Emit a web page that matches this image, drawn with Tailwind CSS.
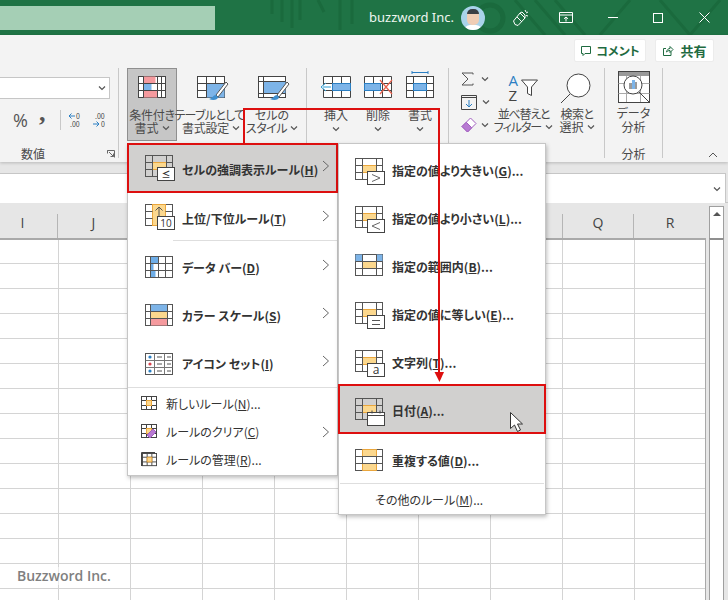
<!DOCTYPE html>
<html lang="ja">
<head>
    <meta charset="UTF-8" />
    <title>Excel 条件付き書式</title>
    <script src="https://cdn.jsdelivr.net/npm/@tailwindcss/browser@4"></script>
</head>
<body class="w-[728px] h-[600px] overflow-hidden relative bg-white text-[12px] text-[#444] [font-feature-settings:'palt'] font-['Noto_Sans_CJK_JP','Noto_Sans',sans-serif]">

    <!-- shared icon parts -->
    <svg class="hidden">
        <symbol id="chev" viewBox="0 0 8 6"><path d="M1 1.500 4 4.500 7 1.500" fill="none" stroke="#555" stroke-width="1.200"/></symbol>
        <symbol id="arrow" viewBox="0 0 8 12"><path d="M1 1 6.500 6 1 11" fill="none" stroke="#666" stroke-width="1"/></symbol>
        <symbol id="cellgrid" viewBox="0 0 30 28">
            <rect x="7.500" y="7.500" width="14" height="7" fill="#fcd88e"/>
            <path d="M7.500 14.500h14M7.500 7.500h14" stroke="#eaa63c" fill="none"/>
            <rect x=".5" y=".5" width="27" height="21" fill="none" stroke="#555"/>
            <path d="M.5 7.500h7M21.500 7.500h6M.5 14.500h7M21.500 14.500h6M7.500 .5v21M21.500 .5v21" stroke="#555" fill="none"/>
        </symbol>
        <symbol id="small" viewBox="0 0 16 16">
            <rect x=".5" y=".5" width="15" height="13" fill="#fff" stroke="#444"/>
            <path d="M.5 4.500h15M.5 9.500h15M5.500 .5v13M10.500 .5v13" stroke="#444" fill="none"/>
            <rect x="5.500" y="4.500" width="5" height="5" fill="#fcd88e" stroke="#eaa63c"/>
        </symbol>
    </svg>

    <!-- Title bar -->
    <div class="relative h-[35px] bg-[#1f7345] flex items-center text-white overflow-hidden">
        <svg class="absolute inset-0" width="728" height="35" fill="none" stroke="#1a6a3d" stroke-width="3">
            <path d="M272 0v14M282 0v22M292 0v28M300 0v20M318 0l6 12M340 0v30M352 0v24"/>
            <circle cx="490" cy="18" r="13" stroke-width="5"/>
            <path d="M515 0l30 35M535 0l30 35M555 0l30 35M600 35l30-35M660 0l30 35M690 35l30-35"/>
        </svg>
        <div class="relative w-[215px] h-[24px] bg-[#a5cfb5] shrink-0"></div>
        <div class="relative ml-[154px] w-[92px] text-[13px] leading-[35px] font-['Noto_Sans',sans-serif] text-[#eef6f0] whitespace-nowrap">buzzword Inc.</div>
        <div class="relative w-[24px] h-[24px] rounded-full bg-[#a9d3ea] overflow-hidden shrink-0">
            <div class="absolute left-[6px] top-[4px] w-[12px] h-[15px] rounded-[5px] bg-[#f0cdb5]"></div>
            <div class="absolute left-[6px] top-[3px] w-[12px] h-[5px] rounded-t-[5px] bg-[#3a3f45]"></div>
            <div class="absolute left-[3px] top-[19px] w-[18px] h-[8px] bg-white rounded-t-[6px]"></div>
        </div>
        <svg class="relative ml-[27px] shrink-0" width="18" height="18" viewBox="0 0 18 18" fill="none" stroke="#fff" stroke-width="1"><path d="M1.500 12 8 4l5 5-7 7.500-3-1zM8 4l2-1 3 3v3M5 8l5 5M13 1l1 2M16 3l-2 1M16 7l-2-.5"/></svg>
        <svg class="relative ml-[29px] shrink-0" width="14" height="12" viewBox="0 0 14 12" fill="none" stroke="#fff"><path d="M.5 .5h13v10H.5zM.5 3h13M7 9.500V5M5 6.800 7 5l2 1.800"/></svg>
        <div class="relative ml-[35px] w-[10px] h-px bg-white shrink-0"></div>
        <div class="relative ml-[35px] w-[10px] h-[10px] border border-white shrink-0"></div>
        <svg class="relative ml-[36px] shrink-0" width="11" height="11" viewBox="0 0 11 11" stroke="#fff" fill="none"><path d="M.5 .5l10 10M10.500 .5l-10 10"/></svg>
    </div>

    <!-- Ribbon -->
    <div class="h-[127px] bg-[#f3f3f3] shadow-[0_1px_3px_rgba(0,0,0,0.2)] relative">
        <div class="h-[33px] flex justify-end items-start pt-[4px] pr-[14px] gap-[9px]">
            <div class="w-[72px] h-[23px] bg-white rounded-[2px] border border-[#ececec] flex items-center justify-center gap-[4px] font-bold text-[#1f6b41] text-[12px]">
                <svg width="12" height="12" viewBox="0 0 12 12" fill="none" stroke="#1f6b41"><path d="M1.500 1.500h9v7H5l-2 2v-2H1.500z"/></svg>コメント
            </div>
            <div class="w-[59px] h-[23px] bg-white rounded-[2px] border border-[#ececec] flex items-center justify-center gap-[6px] font-bold text-[#1f6b41] text-[13px]">
                <svg width="12" height="12" viewBox="0 0 12 12" fill="none" stroke="#1f6b41"><path d="M9 6.500v4H1.500v-7H4M4.500 7C5 4.500 6.500 3.500 8 3.500V1.500l3 3-3 3V5.500c-1.500 0-2.500.5-3.500 1.500z"/></svg>共有
            </div>
        </div>
        <div class="h-[94px] flex items-stretch text-center leading-[13px] text-[#4a4a4a]">

            <!-- 数値 -->
            <div class="w-[119px] shrink-0 relative pt-[9px] border-r border-[#c8c8c8] mb-[4px]">
                <div class="w-[110px] h-[22px] bg-white border border-[#c6c6c6] border-l-0 flex items-center justify-end pr-[3px]">
                    <svg width="8" height="6"><use href="#chev"/></svg>
                </div>
                <div class="flex items-center h-[20px] mt-[11px] text-[#555]">
                    <svg width="4" height="6" class="shrink-0"><use href="#chev" x="-4"/></svg>
                    <span class="ml-[9px] w-[26px] text-[18px] leading-[20px] text-left font-['Open_Sans',sans-serif] shrink-0">%</span>
                    <span class="w-[20px] h-[20px] text-[26px] leading-[16px] font-bold text-left font-['Liberation_Serif',serif] shrink-0 relative -top-[5px]">,</span>
                    <div class="ml-px w-px h-[20px] bg-[#c8c8c8] shrink-0"></div>
                    <svg class="ml-[7px] shrink-0" width="16" height="16" viewBox="0 0 16 16"><path d="M7 4H1M3.500 1.500 1 4l2.500 2.500" stroke="#2b7fc3" fill="none"/><text x="8" y="7" font-size="7" fill="#444">0</text><text x="2" y="15" font-size="7" fill="#444">.00</text></svg>
                    <svg class="ml-[8px] shrink-0" width="16" height="16" viewBox="0 0 16 16"><text x="3" y="7" font-size="7" fill="#444">.00</text><path d="M1 12h6M4.500 9.500 7 12l-2.500 2.500" stroke="#2b7fc3" fill="none"/><text x="9" y="15" font-size="7" fill="#444">0</text></svg>
                </div>
                <div class="absolute left-[21px] top-[78px] text-[12px] leading-[16px]">数値</div>
                <svg class="absolute left-[107px] top-[82px]" width="8" height="8" viewBox="0 0 8 8" fill="none" stroke="#666"><path d="M.5 .5h7v7M.5 .5v3M3.500 .5H.5M2 2l4.500 4.500M3.500 6.500h3v-3"/></svg>
            </div>

            <!-- 条件付き書式 -->
            <div class="ml-[8px] w-[50px] h-[73px] shrink-0 bg-[#c6c6c6] border border-[#8f8f8f] flex flex-col items-center">
                <svg class="mt-[7px] -mb-px shrink-0" width="28" height="33" viewBox="0 0 28 33">
                    <rect x=".5" y=".5" width="27" height="21" fill="#fff" stroke="#444"/>
                    <path d="M5.500 .5h12v7h-12z" fill="#f59a9e"/>
                    <path d="M5.500 7.500h8v7h-8z" fill="#7db4e8"/>
                    <path d="M5.500 14.500h14v7h-14z" fill="#f59a9e"/>
                    <path d="M.5 7.500h27M.5 14.500h27M5.500 .5v21M19.500 .5v21M23.500 .5v21" stroke="#444" fill="none"/>
                </svg>
                <div class="whitespace-nowrap tracking-[-0.2px]">条件付き</div>
                <div class="whitespace-nowrap flex items-center justify-center gap-[3px]">書式<svg width="8" height="6"><use href="#chev"/></svg></div>
            </div>

            <!-- テーブルとして書式設定 -->
            <div class="ml-px w-[66px] shrink-0 flex flex-col items-center">
                <svg class="mt-[8px] -mb-px ml-[4px] shrink-0" width="32" height="33" viewBox="0 0 32 33">
                    <rect x=".5" y=".5" width="27" height="21" fill="#fff" stroke="#444"/>
                    <rect x="9.500" y="7.500" width="18" height="14" fill="#7db4e8"/>
                    <path d="M.5 7.500h27M.5 14.500h9M9.500 .5v21M18.500 .5v7" stroke="#444" fill="none"/>
                    <path d="M29 6 19 19l2 2L31 8z" fill="#fff" stroke="#555"/>
                    <path d="M19 19c-3 0-3 3-7 4 4 2 9 1 9-2z" fill="#3f8fcf"/>
                </svg>
                <div class="whitespace-nowrap tracking-[-0.7px] -ml-[3px]">テーブルとして</div>
                <div class="whitespace-nowrap flex items-center justify-center gap-[3px] tracking-[-0.2px]">書式設定<svg width="8" height="6"><use href="#chev"/></svg></div>
            </div>

            <!-- セルのスタイル -->
            <div class="w-[56px] shrink-0 flex flex-col items-center">
                <svg class="mt-[8px] -mb-px ml-[4px] shrink-0" width="32" height="33" viewBox="0 0 32 33">
                    <rect x=".5" y=".5" width="27" height="21" fill="#fff" stroke="#444"/>
                    <rect x="5.500" y="5.500" width="22" height="12" fill="#7db4e8"/>
                    <path d="M.5 5.500h27M5.500 .5v21M.5 17.500h27" stroke="#444" fill="none"/>
                    <path d="M29 6 19 19l2 2L31 8z" fill="#fff" stroke="#555"/>
                    <path d="M19 19c-3 0-3 3-7 4 4 2 9 1 9-2z" fill="#3f8fcf"/>
                </svg>
                <div class="whitespace-nowrap">セルの</div>
                <div class="whitespace-nowrap flex items-center justify-center gap-[3px] tracking-[-0.5px]">スタイル<svg width="8" height="6"><use href="#chev"/></svg></div>
            </div>

            <!-- セル -->
            <div class="ml-[6px] w-[143px] shrink-0 pl-[8px] pr-[7px] flex border-x border-[#c8c8c8] mb-[4px]">
                <div class="w-[42px] flex flex-col items-center">
                    <svg class="mt-[8px] -mb-px shrink-0" width="32" height="33" viewBox="0 0 32 33">
                        <path d="M3.500 .5h27v21h-27z" fill="#fff" stroke="#444"/>
                        <path d="M3.500 7.500h27M3.500 14.500h27M12.500 .5v21M21.500 .5v21" stroke="#444" fill="none"/>
                        <rect x="12.500" y="7.500" width="18" height="7" fill="#7db4e8" stroke="#2b7fc3"/>
                        <path d="M11 11H3M6 7 1 11l5 4" fill="#fff" stroke="#2b9bd3"/>
                    </svg>
                    <div class="whitespace-nowrap">挿入</div>
                    <svg class="mt-[5px]" width="8" height="6"><use href="#chev"/></svg>
                </div>
                <div class="w-[42px] flex flex-col items-center">
                    <svg class="mt-[8px] -mb-px shrink-0" width="32" height="33" viewBox="0 0 32 33">
                        <path d="M2.500 .5h27v21h-27z" fill="#fff" stroke="#444"/>
                        <path d="M2.500 7.500h27M2.500 14.500h27M11.500 .5v21M20.500 .5v21" stroke="#444" fill="none"/>
                        <rect x="2.500" y="7.500" width="16" height="7" fill="#7db4e8" stroke="#2b7fc3"/>
                        <path d="M18 4 30 18M30 4 18 18" stroke="#e8604c" stroke-width="1.200" fill="none"/>
                    </svg>
                    <div class="whitespace-nowrap">削除</div>
                    <svg class="mt-[5px]" width="8" height="6"><use href="#chev"/></svg>
                </div>
                <div class="w-[42px] flex flex-col items-center">
                    <svg class="mt-[3px] -mb-px shrink-0" width="28" height="38" viewBox="0 0 28 38">
                        <path d="M6 1.500h16M6 0v3M22 0v3" stroke="#2b7fc3" fill="none"/>
                        <rect x=".5" y="5.500" width="27" height="21" fill="#fff" stroke="#444"/>
                        <path d="M.5 12.500h27M.5 19.500h27M7.500 5.500v21M20.500 5.500v21" stroke="#444" fill="none"/>
                        <rect x="7.500" y="12.500" width="13" height="7" fill="#7db4e8" stroke="#2b7fc3"/>
                    </svg>
                    <div class="whitespace-nowrap">書式</div>
                    <svg class="mt-[5px]" width="8" height="6"><use href="#chev"/></svg>
                </div>
            </div>

            <!-- 編集 -->
            <div class="w-[156px] shrink-0 flex border-r border-[#c8c8c8] mb-[4px] relative">
                <div class="w-[44px] pl-[12px] pt-[1px] flex flex-col gap-[3px] shrink-0">
                    <div class="h-[20px] flex items-center gap-[7px]">
                        <svg width="13" height="14" viewBox="0 0 13 14" fill="none" stroke="#555"><path d="M12 2.500V1H1l6 6-6 6h11v-1.500"/></svg>
                        <svg width="8" height="6"><use href="#chev"/></svg>
                    </div>
                    <div class="h-[20px] flex items-center gap-[5px]">
                        <svg width="16" height="15" viewBox="0 0 16 15" fill="none"><path d="M.5 .5h15v14H.5zM.5 2.500h15" stroke="#444"/><path d="M8 5v7M5 9l3 3 3-3" stroke="#2b7fc3"/></svg>
                        <svg width="8" height="6"><use href="#chev"/></svg>
                    </div>
                    <div class="h-[20px] flex items-center gap-[4px]">
                        <svg width="16" height="16" viewBox="0 0 16 16"><path d="M9.500 1 15 6.500 6.500 15 1 9.500z" fill="#fff" stroke="#a25fc0"/><path d="M5.250 5.250 1 9.500 6.500 15l4.250-4.250z" fill="#b77ad2" stroke="#a25fc0"/></svg>
                        <svg width="8" height="6"><use href="#chev"/></svg>
                    </div>
                </div>
                <div class="w-[61px] flex flex-col items-center shrink-0">
                    <div class="h-[39px] w-[30px] shrink-0 relative">
                        <span class="absolute left-0 top-[3px] text-[15px] leading-[18px] text-[#2b7fc3] font-['Open_Sans',sans-serif]">A</span>
                        <span class="absolute left-0 top-[18px] text-[15px] leading-[18px] text-[#444] font-['Open_Sans',sans-serif]">Z</span>
                        <svg class="absolute left-[12px] top-[11px]" width="17" height="18" viewBox="0 0 17 18" fill="#fff" stroke="#444"><path d="M.5 1h16l-6 7v8.500l-4-2V8z"/></svg>
                    </div>
                    <div class="whitespace-nowrap tracking-[-1.200px]">並べ替えと</div>
                    <div class="whitespace-nowrap flex items-center justify-center gap-[4px] tracking-[-1px]">フィルター<svg width="8" height="6"><use href="#chev"/></svg></div>
                </div>
                <div class="w-[46px] flex flex-col items-center shrink-0">
                    <svg class="mt-[5px] mb-[1px] mr-[4px] shrink-0" width="32" height="33" viewBox="0 0 32 33" fill="none" stroke="#444"><circle cx="19.500" cy="12.500" r="11.500" fill="#fff"/><path d="M11 21 2 30"/></svg>
                    <div class="whitespace-nowrap tracking-[-0.5px]">検索と</div>
                    <div class="whitespace-nowrap flex items-center justify-center gap-[3px]">選択<svg width="8" height="6"><use href="#chev"/></svg></div>
                </div>
            </div>

            <!-- 分析 -->
            <div class="w-[58px] shrink-0 flex flex-col items-center border-r border-[#c8c8c8] mb-[4px] relative">
                <svg class="mt-[3px] shrink-0" width="32" height="33" viewBox="0 0 32 33">
                    <rect x=".5" y=".5" width="31" height="31" fill="#fff" stroke="#444"/>
                    <rect x="1" y="1" width="30" height="4" fill="#999"/>
                    <path d="M.5 12.500h31M.5 22.500h31M8.500 5v26M22.500 5v26" stroke="#aaa" fill="none"/>
                    <circle cx="15" cy="14" r="9" fill="#fff" stroke="#444"/>
                    <path d="M11 12h3v6h-3z" fill="#9b9b9b"/><path d="M14 9h3v9h-3z" fill="#7db4e8"/><path d="M17 11h2v7h-2z" fill="#9b9b9b"/>
                    <path d="M21 21 31 31" stroke="#444"/>
                </svg>
                <div class="mt-[2px]">データ</div>
                <div class="mt-px">分析</div>
                <div class="absolute left-0 right-0 top-[78px] text-[12px] leading-[16px]">分析</div>
            </div>
            <svg class="ml-[45px] mt-[84px] shrink-0" width="10" height="6" viewBox="0 0 10 6" fill="none" stroke="#555"><path d="M1 5 5 1l4 4"/></svg>
        </div>
    </div>

    <!-- Formula bar -->
    <div class="h-[41px] bg-[#e6e6e6] pt-[11px] pr-[2px] border-b border-[#c6c6c6]">
        <div class="h-[30px] bg-white border border-[#c6c6c6] border-l-0 border-b-0 flex items-center justify-end pr-[4px]">
            <svg width="8" height="6"><use href="#chev"/></svg>
        </div>
    </div>

    <!-- Column headers -->
    <div class="h-[35px] bg-[#e6e6e6] flex text-[14px] text-[#444] font-['Open_Sans',sans-serif] relative">
        <div class="w-[58px] flex items-end justify-center pr-[12px] pb-[5px] shrink-0 border-r border-[#b5b5b5] mt-[11px]">I</div>
        <div class="w-[72px] flex items-end justify-center pb-[5px] shrink-0 border-r border-[#b5b5b5] mt-[11px]">J</div>
        <div class="w-[432px] shrink-0"></div>
        <div class="w-[72px] flex items-end justify-center pb-[5px] shrink-0 border-x border-[#b5b5b5] mt-[11px]">Q</div>
        <div class="w-[72px] flex items-end justify-center pb-[5px] shrink-0 mt-[11px]">R</div>
        <div class="ml-[3px] mt-[3px] w-[15px] h-[32px] bg-white border border-[#9f9f9f] border-b-0 flex items-start justify-center pt-[5px]">
            <div class="w-0 h-0 border-x-[4px] border-x-transparent border-b-[4px] border-b-[#555]"></div>
        </div>
    </div>

    <!-- Sheet -->
    <div class="h-[362px] flex bg-[#e6e6e6]">
        <div class="w-[706px] border-t-2 border-r border-t-[#a9a9a9] border-r-[#a9a9a9] bg-white bg-[linear-gradient(to_right,#d4d4d4_1px,transparent_1px),linear-gradient(to_bottom,#d4d4d4_1px,transparent_1px)] bg-[size:72px_25px] bg-[position:58px_23px] shrink-0"></div>
        <div class="ml-[3px] w-[15px] bg-white border-x border-[#9f9f9f] border-t-2 border-t-[#8f8f8f]"></div>
    </div>
    <div class="absolute left-[17px] top-[567px] text-[14px] leading-[18px] font-semibold text-[#808080] font-['Open_Sans',sans-serif] bg-white/50">Buzzword Inc.</div>

    <!-- Left flyout -->
    <div class="absolute left-[127px] top-[143px] w-[211px] h-[333px] bg-white border border-[#c6c6c6] shadow-[1px_2px_4px_rgba(0,0,0,0.25)] font-medium text-[#333]">
        <div class="h-[50px] -mt-px -mx-px flex items-center pt-[4px] bg-[#d1d0cf] border-2 border-[#dd0f0f] font-bold">
            <div class="ml-[16px] mt-[-2px] w-[37px] h-[28px] relative shrink-0">
                <svg width="30" height="28" class="absolute left-0 top-0"><use href="#cellgrid"/></svg>
                <div class="absolute left-[12px] top-[12px] w-[18px] h-[14px] bg-white border border-[#444] flex items-center justify-center text-[9px] leading-[9px]">≤</div>
            </div>
            <div class="whitespace-nowrap">セルの強調表示ルール(<u>H</u>)</div>
            <svg class="ml-auto mr-[6px] mt-[-8px] shrink-0" width="8" height="12"><use href="#arrow"/></svg>
        </div>
        <div class="h-[47px] flex items-center pt-[4px] font-bold">
            <div class="ml-[17px] mt-[-2px] w-[37px] h-[28px] relative shrink-0">
                <svg width="28" height="22" viewBox="0 0 28 22" class="absolute left-0 top-0"><rect x=".5" y=".5" width="27" height="21" fill="#fff" stroke="#555"/><rect x="7.500" y=".5" width="13" height="21" fill="#fcd88e" stroke="#eaa63c"/><path d="M.5 7.500h7M20.500 7.500h7M.5 14.500h7M14 13V3M10.500 6.500 14 3l3.500 3.500" stroke="#555" fill="none"/></svg>
                <div class="absolute left-[12px] top-[12px] w-[18px] h-[14px] bg-white border border-[#444] flex items-center justify-center text-[10px] leading-[10px] font-normal font-['Open_Sans',sans-serif]">10</div>
            </div>
            <div class="whitespace-nowrap">上位/下位ルール(<u>T</u>)</div>
            <svg class="ml-auto mr-[7px] mt-[-6px] shrink-0" width="8" height="12"><use href="#arrow"/></svg>
        </div>
        <div class="ml-[45px] h-px bg-[#dedede]"></div>
        <div class="h-[48px] flex items-center pt-[6px] font-bold">
            <svg class="ml-[17px] mb-[3px] shrink-0" width="37" height="22" viewBox="0 0 37 22"><rect x=".5" y=".5" width="27" height="21" fill="#fff" stroke="#555"/><path d="M5.500 .5h8v7h-5v7h2v7h-5z" fill="#6faee8"/><path d="M.5 .5h27v21H.5zM.5 7.500h27M.5 14.500h27M5.500 .5v21M13.500 .5v21M20.500 .5v21" stroke="#555" fill="none"/></svg>
            <div class="whitespace-nowrap">データ バー(<u>D</u>)</div>
            <svg class="ml-auto mr-[7px] mb-[6px] shrink-0" width="8" height="12"><use href="#arrow"/></svg>
        </div>
        <div class="h-[48px] flex items-center pt-[6px] font-bold">
            <svg class="ml-[17px] mb-[3px] shrink-0" width="37" height="22" viewBox="0 0 37 22"><rect x=".5" y=".5" width="27" height="21" fill="#fff" stroke="#555"/><rect x="5.500" y=".5" width="17" height="7" fill="#7db4e8"/><rect x="5.500" y="7.500" width="17" height="7" fill="#fcd88e"/><rect x="5.500" y="14.500" width="17" height="7" fill="#f59a9e"/><path d="M.5 7.500h27M.5 14.500h27M5.500 .5v21M22.500 .5v21" stroke="#555" fill="none"/></svg>
            <div class="whitespace-nowrap">カラー スケール(<u>S</u>)</div>
            <svg class="ml-auto mr-[7px] mb-[6px] shrink-0" width="8" height="12"><use href="#arrow"/></svg>
        </div>
        <div class="h-[50px] flex items-center pt-[4px] font-bold">
            <svg class="ml-[17px] shrink-0" width="37" height="22" viewBox="0 0 37 22"><rect x=".5" y=".5" width="27" height="21" fill="#fff" stroke="#555"/><path d="M.5 7.500h27M.5 14.500h27M9.500 .5v21M19.500 .5v21" stroke="#777" fill="none"/><circle cx="5" cy="4" r="1.600" fill="#2b7fc3"/><circle cx="5" cy="11" r="1.600" fill="#d9434e"/><circle cx="5" cy="18" r="1.600" fill="#2b7fc3"/><path d="M12 4h5M22 4h4M12 11h5M22 11h4M12 18h5M22 18h4" stroke="#555"/></svg>
            <div class="whitespace-nowrap">アイコン セット(<u>I</u>)</div>
            <svg class="ml-auto mr-[7px] mb-[6px] shrink-0" width="8" height="12"><use href="#arrow"/></svg>
        </div>
        <div class="h-px bg-[#dedede]"></div>
        <div class="pt-[2px] font-normal">
            <div class="h-[28px] flex items-center">
                <svg class="ml-[13px] mr-[9px] shrink-0" width="16" height="16"><use href="#small"/></svg>新しいルール(<u>N</u>)...
            </div>
            <div class="h-[28px] flex items-center">
                <svg class="ml-[13px] mr-[9px] shrink-0" width="16" height="16" viewBox="0 0 16 16"><use href="#small"/><path d="M12 5l3 3-6 6-3-3z" fill="#b77ad2" stroke="#a25fc0"/></svg>ルールのクリア(<u>C</u>)
                <svg class="ml-auto mr-[7px] shrink-0" width="8" height="12"><use href="#arrow"/></svg>
            </div>
            <div class="h-[28px] flex items-center">
                <svg class="ml-[13px] mr-[9px] shrink-0" width="16" height="16" viewBox="0 0 16 16"><path d="M.5 14V.5H14" stroke="#444" fill="none"/><svg x="1" y="1" width="15" height="15"><use href="#small"/></svg></svg>ルールの管理(<u>R</u>)...
            </div>
        </div>
    </div>

    <!-- Right flyout -->
    <div class="absolute left-[338px] top-[143px] w-[208px] h-[372px] bg-white border border-[#c6c6c6] shadow-[1px_2px_4px_rgba(0,0,0,0.25)] font-bold text-[#333]">
        <div class="h-[48px] flex items-center pt-[6px]">
            <div class="ml-[16px] mt-[2px] w-[37px] h-[28px] relative shrink-0">
                <svg width="30" height="28" class="absolute left-0 top-0"><use href="#cellgrid"/></svg>
                <svg class="absolute left-[12px] top-[13px]" width="18" height="14" viewBox="0 0 18 14"><rect x=".5" y=".5" width="17" height="13" fill="#fff" stroke="#444"/><path d="M5 3.500 13 7 5 10.500" fill="none" stroke="#666"/></svg>
            </div>
            指定の値より大きい(<u>G</u>)...
        </div>
        <div class="h-[48px] flex items-center pt-[6px]">
            <div class="ml-[16px] mt-[2px] w-[37px] h-[28px] relative shrink-0">
                <svg width="30" height="28" class="absolute left-0 top-0"><use href="#cellgrid"/></svg>
                <svg class="absolute left-[12px] top-[13px]" width="18" height="14" viewBox="0 0 18 14"><rect x=".5" y=".5" width="17" height="13" fill="#fff" stroke="#444"/><path d="M13 3.500 5 7l8 3.500" fill="none" stroke="#666"/></svg>
            </div>
            指定の値より小さい(<u>L</u>)...
        </div>
        <div class="h-[48px] flex items-center pt-[6px]">
            <svg class="ml-[16px] mb-[4px] shrink-0" width="37" height="22" viewBox="0 0 37 22"><rect x=".5" y=".5" width="27" height="21" fill="#fff" stroke="#555"/><path d="M.5 .5h7v7h-7zM21.500 .5h6v7h-6z" fill="#7db4e8"/><rect x="7.500" y="7.500" width="14" height="7" fill="#fcd88e"/><path d="M.5 7.500h27M.5 14.500h27M7.500 .5v21M21.500 .5v21" stroke="#555" fill="none"/></svg>
            指定の範囲内(<u>B</u>)...
        </div>
        <div class="h-[48px] flex items-center pt-[6px]">
            <div class="ml-[16px] mt-[2px] w-[37px] h-[28px] relative shrink-0">
                <svg width="30" height="28" class="absolute left-0 top-0"><use href="#cellgrid"/></svg>
                <svg class="absolute left-[12px] top-[13px]" width="18" height="14" viewBox="0 0 18 14"><rect x=".5" y=".5" width="17" height="13" fill="#fff" stroke="#444"/><path d="M5 5.500h8M5 9.500h8" fill="none" stroke="#555"/></svg>
            </div>
            指定の値に等しい(<u>E</u>)...
        </div>
        <div class="h-[48px] flex items-center pt-[6px]">
            <div class="ml-[16px] mt-[2px] w-[37px] h-[28px] relative shrink-0">
                <svg width="30" height="28" class="absolute left-0 top-0"><use href="#cellgrid"/></svg>
                <div class="absolute left-[12px] top-[13px] w-[18px] h-[14px] bg-white border border-[#444] flex items-center justify-center text-[12px] leading-[12px] font-normal font-['Open_Sans',sans-serif]">a</div>
            </div>
            文字列(<u>T</u>)...
        </div>
        <div class="h-[50px] -mx-px flex items-center pt-[4px] bg-[#d1d0cf] border-2 border-[#dd0f0f]">
            <div class="ml-[15px] mt-px w-[37px] h-[28px] relative shrink-0">
                <svg width="30" height="28" class="absolute left-0 top-0"><use href="#cellgrid"/></svg>
                <svg class="absolute left-[12px] top-[12px]" width="18" height="16" viewBox="0 0 18 16"><rect x=".5" y="2.500" width="17" height="13" fill="#fff" stroke="#444"/><path d="M.5 5.500h17M5 .5v3M13 .5v3" stroke="#444" fill="none"/></svg>
            </div>
            日付(<u>A</u>)...
        </div>
        <div class="h-[49px] flex items-center pt-[4px]">
            <svg class="ml-[16px] mb-[2px] shrink-0" width="37" height="22" viewBox="0 0 37 22"><rect x=".5" y=".5" width="27" height="21" fill="#fff" stroke="#555"/><path d="M7.500 .5h14v7h-14zM7.500 14.500h14v7h-14z" fill="#fcd88e" stroke="#eaa63c"/><path d="M.5 7.500h7M21.500 7.500h6M.5 14.500h7M21.500 14.500h6M7.500 7.500v7M21.500 7.500v7M.5 7.500h27M.5 14.500h27" stroke="#555" fill="none"/></svg>
            重複する値(<u>D</u>)...
        </div>
        <div class="mx-px h-px bg-[#dedede]"></div>
        <div class="h-[31px] pl-[36px] flex items-center font-normal">その他のルール(<u>M</u>)...</div>
    </div>

    <!-- Annotation line and mouse pointer -->
    <svg class="absolute left-0 top-0 pointer-events-none" width="728" height="600" fill="none">
        <path d="M244 143V109H439V374" stroke="#dd0f0f" stroke-width="2"/>
        <path d="M434.500 372h9.500L439.500 382z" fill="#dd0f0f"/>
        <path d="M510.500 412.500v16l4-3.500 3 6.500 3-1.500-3-6h5z" fill="#fff" stroke="#333"/>
    </svg>
</body>
</html>
